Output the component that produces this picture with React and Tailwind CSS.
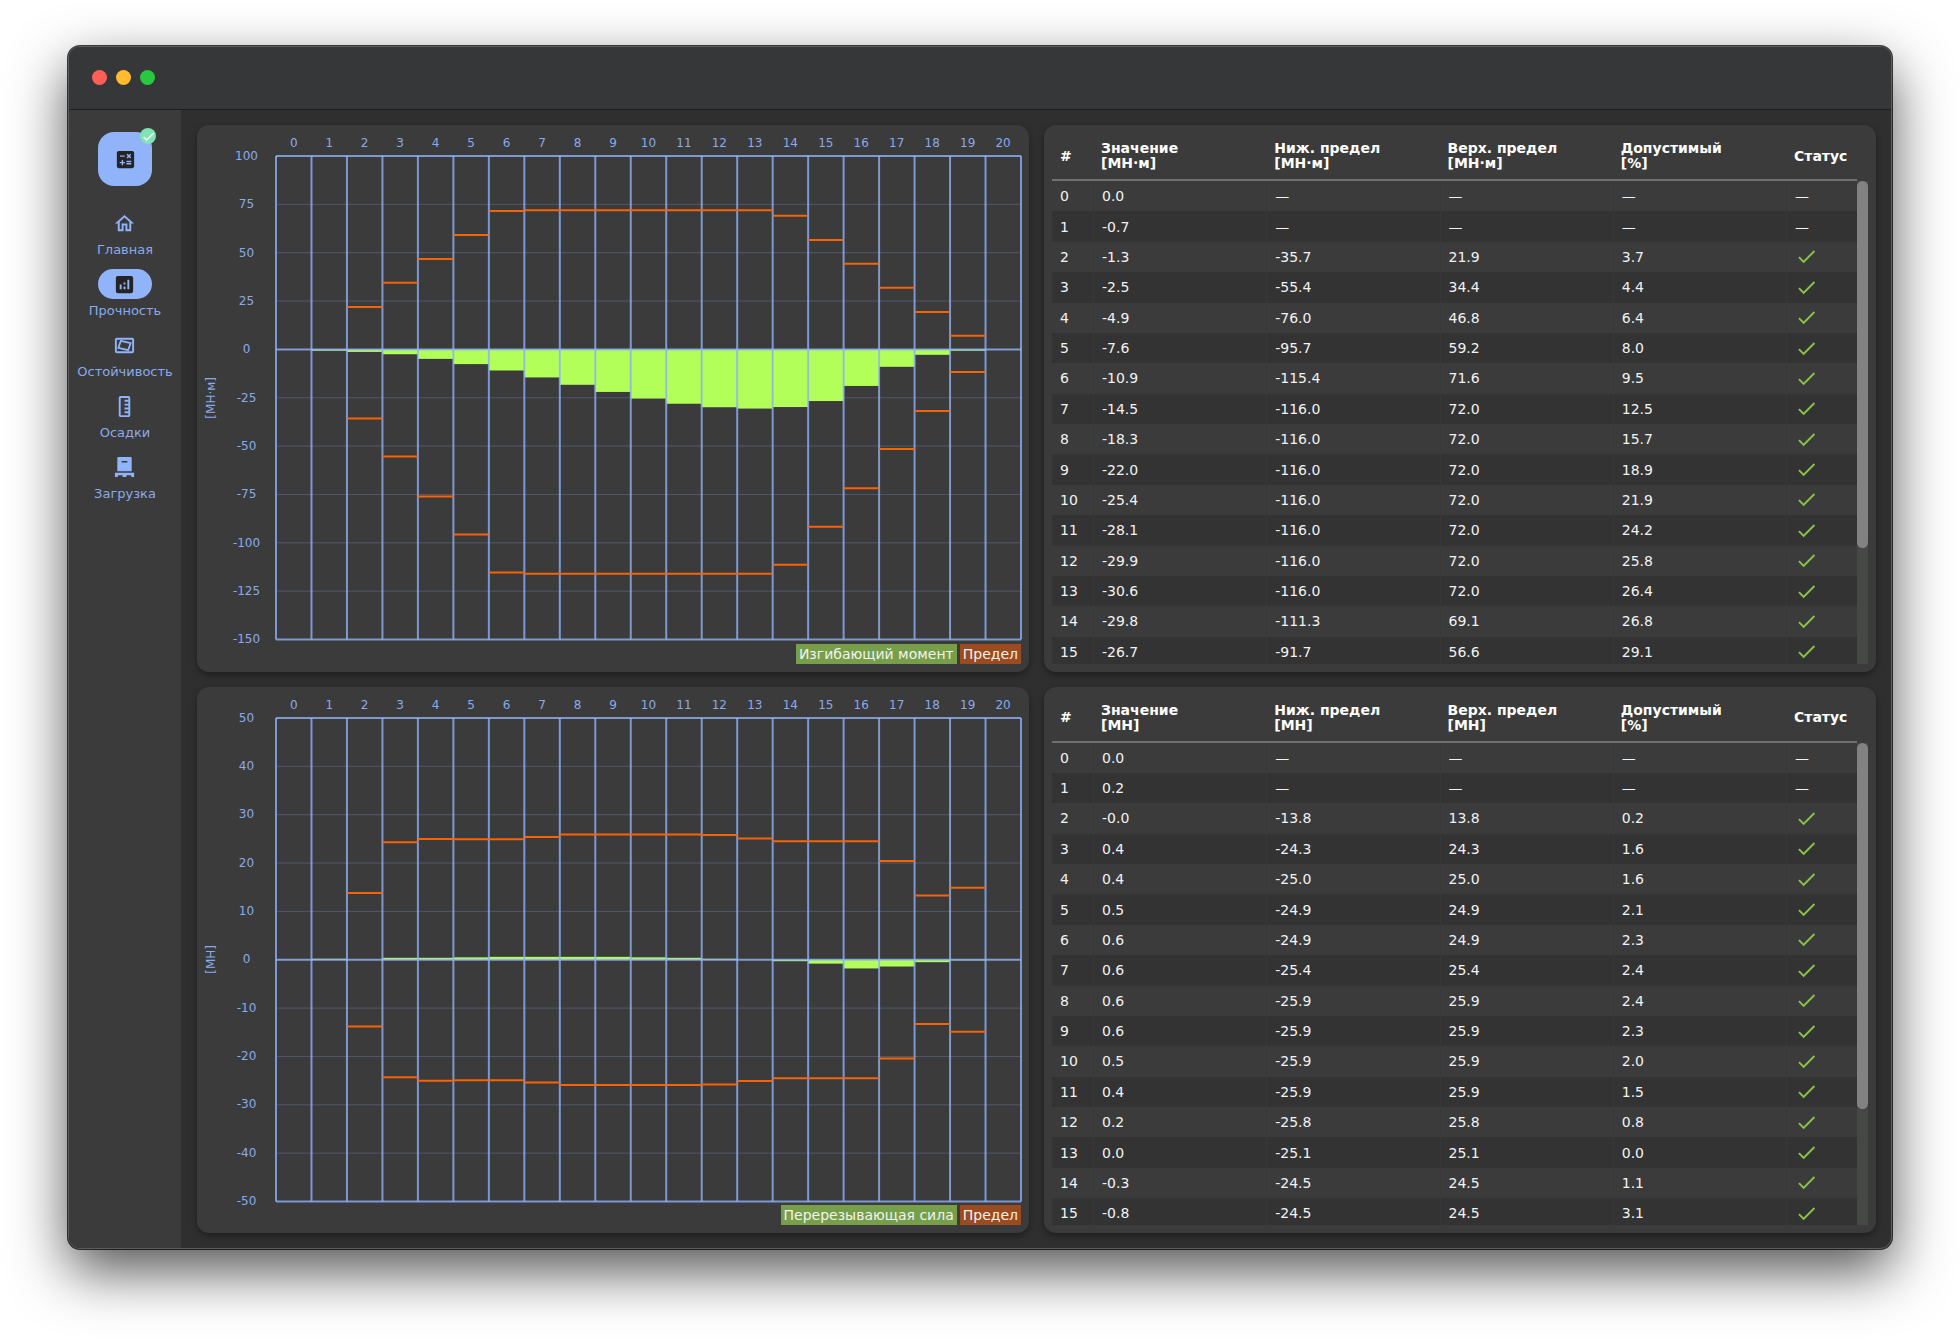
import React from "react";
import {
  MdAnalytics,
  MdCalculate,
  MdCheck,
  MdOutlineHome,
  MdStraighten,
} from "react-icons/md";

// [value, lower limit, upper limit, percent]
const bending = [
  ["0.0", null, null, null],
  ["-0.7", null, null, null],
  ["-1.3", "-35.7", "21.9", "3.7"],
  ["-2.5", "-55.4", "34.4", "4.4"],
  ["-4.9", "-76.0", "46.8", "6.4"],
  ["-7.6", "-95.7", "59.2", "8.0"],
  ["-10.9", "-115.4", "71.6", "9.5"],
  ["-14.5", "-116.0", "72.0", "12.5"],
  ["-18.3", "-116.0", "72.0", "15.7"],
  ["-22.0", "-116.0", "72.0", "18.9"],
  ["-25.4", "-116.0", "72.0", "21.9"],
  ["-28.1", "-116.0", "72.0", "24.2"],
  ["-29.9", "-116.0", "72.0", "25.8"],
  ["-30.6", "-116.0", "72.0", "26.4"],
  ["-29.8", "-111.3", "69.1", "26.8"],
  ["-26.7", "-91.7", "56.6", "29.1"],
  ["-18.9", "-71.8", "44.3", "26.3"],
  ["-9.0", "-51.5", "31.9", "17.5"],
  ["-2.8", "-31.9", "19.4", "8.8"],
  ["-0.7", "-11.7", "7.0", "6.0"],
  ["0.0", null, null, null],
];

const shear = [
  ["0.0", null, null, null],
  ["0.2", null, null, null],
  ["-0.0", "-13.8", "13.8", "0.2"],
  ["0.4", "-24.3", "24.3", "1.6"],
  ["0.4", "-25.0", "25.0", "1.6"],
  ["0.5", "-24.9", "24.9", "2.1"],
  ["0.6", "-24.9", "24.9", "2.3"],
  ["0.6", "-25.4", "25.4", "2.4"],
  ["0.6", "-25.9", "25.9", "2.4"],
  ["0.6", "-25.9", "25.9", "2.3"],
  ["0.5", "-25.9", "25.9", "2.0"],
  ["0.4", "-25.9", "25.9", "1.5"],
  ["0.2", "-25.8", "25.8", "0.8"],
  ["0.0", "-25.1", "25.1", "0.0"],
  ["-0.3", "-24.5", "24.5", "1.1"],
  ["-0.8", "-24.5", "24.5", "3.1"],
  ["-1.8", "-24.5", "24.5", "7.3"],
  ["-1.4", "-20.4", "20.4", "6.9"],
  ["-0.5", "-13.3", "13.3", "3.8"],
  ["-0.1", "-14.9", "14.9", "0.7"],
  ["0.0", null, null, null],
];

const PAGE = 16;

function StabilityIcon() {
  return (
    <svg viewBox="0 0 24 24" className="size-[23px]" fill="none" stroke="currentColor">
      <rect x="3" y="5" width="18" height="14" rx="1" strokeWidth="2" />
      <path d="M8.2 7.2 L18.4 9.6 L15.8 16.8 L5.6 14.4 Z" strokeWidth="1.9" />
    </svg>
  );
}

function PalletIcon() {
  return (
    <svg viewBox="0 0 24 24" className="size-[23px]" fill="currentColor">
      <path
        d="M5.500 1h13a1 1 0 0 1 1 1v13a1 1 0 0 1-1 1h-13a1 1 0 0 1-1-1v-13a1 1 0 0 1 1-1zM9 5.300v1.500h6v-1.500z"
        fillRule="evenodd"
      />
      <path d="M2 17.500h20v4.500h-3v-2h-5v2h-4v-2h-5v2h-3z" />
    </svg>
  );
}

const nav = [
  { label: "Главная", icon: <MdOutlineHome size={23} /> },
  { label: "Прочность", icon: <MdAnalytics size={23} />, active: true },
  { label: "Остойчивость", icon: <StabilityIcon /> },
  { label: "Осадки", icon: <MdStraighten size={23} className="rotate-90" /> },
  { label: "Загрузка", icon: <PalletIcon /> },
];

function Sidebar() {
  return (
    <aside className="flex w-28 shrink-0 flex-col items-center bg-[#3b3b3b] pt-[22px]">
      <button
        aria-label="Рассчитать"
        className="relative flex size-[54px] items-center justify-center rounded-2xl bg-[#91b3fa] text-[#242424]"
      >
        <MdCalculate size={23} />
        <span className="absolute -top-1 -right-1 flex size-4 items-center justify-center rounded-full bg-[#80e3b3] text-white">
          <MdCheck size={15} />
        </span>
      </button>

      <nav className="mt-[22px] flex flex-col gap-[11px]">
        {nav.map((item) => (
          <a key={item.label} href="#" className="flex flex-col items-center gap-1 text-[#91b3fa]">
            <span
              className={
                item.active
                  ? "flex h-[30px] w-[54px] items-center justify-center rounded-full bg-[#91b3fa] text-[#242424]"
                  : "flex h-[30px] w-[54px] items-center justify-center"
              }
            >
              {item.icon}
            </span>
            <span className="text-[13px] leading-4 text-[#8aaaec]">{item.label}</span>
          </a>
        ))}
      </nav>
    </aside>
  );
}

function Chart({ rows, ticks, unit, name }) {
  const max = ticks[0];
  const min = ticks[ticks.length - 1];
  const n = rows.length;

  return (
    <section className="flex min-h-0 min-w-0 rounded-xl bg-[#3b3b3b] p-2 text-xs text-[#8aaaec] shadow-[0_3px_6px_rgba(0,0,0,0.35)]">
      <div className="mt-[23px] mb-6 flex w-3 shrink-0 items-center justify-center">
        <span className="rotate-180 leading-3 [writing-mode:vertical-rl]">[{unit}]</span>
      </div>
      <div className="mt-[23px] mb-6 flex w-[59px] shrink-0 flex-col justify-between text-center">
        {ticks.map((t) => (
          <span key={t} className="flex h-0 items-center justify-center">
            {t}
          </span>
        ))}
      </div>

      <div className="flex min-w-0 flex-1 flex-col">
        <div className="mb-[3px] flex h-5 items-center">
          {rows.map((_, i) => (
            <span key={i} className="flex-1 text-center">
              {i}
            </span>
          ))}
        </div>
        <div className="min-h-0 flex-1">
          <svg
            viewBox={`0 ${-max} ${n} ${max - min}`}
            preserveAspectRatio="none"
            className="block h-full w-full overflow-visible"
          >
            {ticks.slice(1, -1).map((t) => (
              <line key={t} x1="0" x2={n} y1={-t} y2={-t} stroke="#91b3fa" strokeOpacity="0.25" vectorEffect="non-scaling-stroke" />
            ))}
            {rows.map(([v], i) => (
              <rect key={i} x={i} width="1" y={Math.min(0, -v)} height={Math.abs(v)} fill="#b2ff59" />
            ))}
            {Array.from({ length: n + 1 }, (_, i) => (
              <line key={i} x1={i} x2={i} y1={-max} y2={-min} stroke="#91b3fa" strokeOpacity="0.78" strokeWidth="2" vectorEffect="non-scaling-stroke" />
            ))}
            {[max, 0, min].map((t) => (
              <line key={t} x1="0" x2={n} y1={-t} y2={-t} stroke="#91b3fa" strokeOpacity="0.78" strokeWidth="2" vectorEffect="non-scaling-stroke" />
            ))}
            {rows.map(([, low, high], i) =>
              low === null ? null : (
                <path
                  key={i}
                  d={`M${i} ${-low}h1M${i} ${-high}h1`}
                  stroke="#f76408"
                  strokeWidth="2"
                  vectorEffect="non-scaling-stroke"
                />
              )
            )}
          </svg>
        </div>
        {/* legend */}
        <div className="mt-1 flex justify-end gap-[3px] text-sm leading-5 text-[#f2f2f2]">
          <span className="bg-[#779f4a] px-[3px]">{name}</span>
          <span className="bg-[#9c4a20] px-[3px]">Предел</span>
        </div>
      </div>
    </section>
  );
}

function DataTable({ rows, unit }) {
  const th = "border-b-2 border-[#707070] px-2 text-left font-bold";
  const td = "border-l border-[#383838] px-2";

  return (
    <section className="flex min-h-0 min-w-0 rounded-xl bg-[#3b3b3b] p-2 shadow-[0_3px_6px_rgba(0,0,0,0.35)]">
      <div className="min-h-0 flex-1 overflow-y-auto [scrollbar-width:none]">
        <table className="h-[534px] w-full table-fixed border-separate border-spacing-0 text-sm leading-4 text-[#f2f2f2]">
          <colgroup>
            <col className="w-[41px]" />
            <col />
            <col />
            <col />
            <col />
            <col className="w-[71px]" />
          </colgroup>
          <thead>
            <tr className="h-12 leading-[15px] text-white">
              <th className={th}>#</th>
              <th className={th}>Значение<br />[{unit}]</th>
              <th className={th}>Ниж. предел<br />[{unit}]</th>
              <th className={th}>Верх. предел<br />[{unit}]</th>
              <th className={th}>Допустимый<br />[%]</th>
              <th className={th}>Статус</th>
            </tr>
          </thead>
          <tbody>
            {rows.slice(0, PAGE).map(([value, low, high, percent], i) => (
              <tr key={i} className="h-[30px] even:bg-[#333333]">
                <td className="px-2">{i}</td>
                <td className={td}>{value}</td>
                <td className={td}>{low ?? "—"}</td>
                <td className={td}>{high ?? "—"}</td>
                <td className={td}>{percent ?? "—"}</td>
                <td className={td}>
                  {percent === null ? "—" : <MdCheck size={23} className="text-[#8bc34a]" />}
                </td>
              </tr>
            ))}
          </tbody>
        </table>
      </div>
      <div className="mt-12 w-[11px] shrink-0 bg-[#464846]">
        <div className="h-[76%] rounded-full bg-[#828282]" />
      </div>
    </section>
  );
}

export default function App() {
  return (
    <div className="flex h-screen bg-white px-[68px] pt-[46px] pb-[90px] font-['DejaVu_Sans',sans-serif]">
      <div className="flex min-w-0 flex-1 flex-col overflow-hidden rounded-xl border border-[#5c5d5e] bg-[#2f2f2f] shadow-[0_0_0_1px_rgba(0,0,0,0.75),0_22px_56px_rgba(0,0,0,0.68)]">
        {/* title bar */}
        <header className="flex h-[63px] shrink-0 items-center gap-[9px] border-b border-[#1d1d1d] bg-[#363738] pb-0.5 pl-[23px]">
          <button aria-label="Закрыть" className="size-[15px] rounded-full bg-[#ff5f57]" />
          <button aria-label="Свернуть" className="size-[15px] rounded-full bg-[#febc2e]" />
          <button aria-label="Развернуть" className="size-[15px] rounded-full bg-[#28c840]" />
        </header>

        <div className="flex min-h-0 flex-1">
          <Sidebar />
          <main className="grid min-w-0 flex-1 grid-cols-2 grid-rows-2 gap-[15px] p-[15px] pl-4">
            <Chart rows={bending} ticks={[100, 75, 50, 25, 0, -25, -50, -75, -100, -125, -150]} unit="МН·м" name="Изгибающий момент" />
            <DataTable rows={bending} unit="МН·м" />
            <Chart rows={shear} ticks={[50, 40, 30, 20, 10, 0, -10, -20, -30, -40, -50]} unit="МН" name="Перерезывающая сила" />
            <DataTable rows={shear} unit="МН" />
          </main>
        </div>
      </div>
    </div>
  );
}
